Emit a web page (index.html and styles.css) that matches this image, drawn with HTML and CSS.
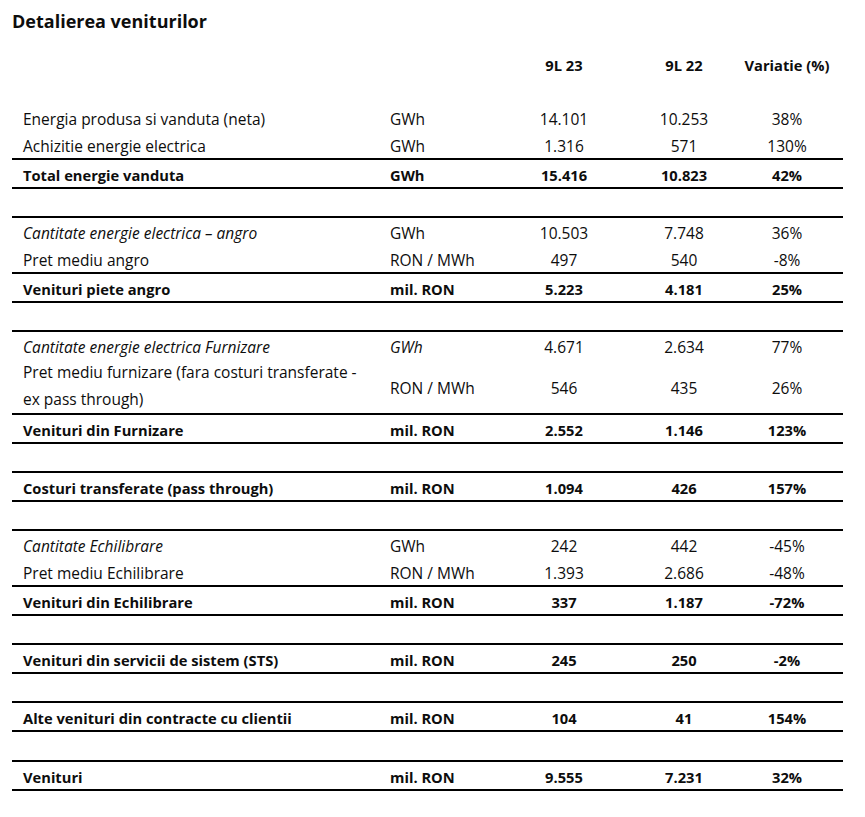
FILE: index.html
```html
<!DOCTYPE html>
<html lang="ro">
<head>
<meta charset="utf-8">
<title>Detalierea veniturilor</title>
<link rel="stylesheet" href="styles.css">
</head>
<body>
<h1 class="title">Detalierea veniturilor</h1>
<table class="rev">
  <colgroup>
    <col class="c-label"><col class="c-unit"><col class="c-num"><col class="c-num"><col class="c-var">
  </colgroup>
  <thead>
    <tr class="head">
      <th></th><th></th><th>9L 23</th><th>9L 22</th><th class="var">Variatie (%)</th>
    </tr>
  </thead>
  <tbody>
    <tr class="blank"><td colspan="5"></td></tr>
    <tr><td class="lbl">Energia produsa si vanduta (neta)</td><td class="unit">GWh</td><td>14.101</td><td>10.253</td><td class="var">38%</td></tr>
    <tr><td class="lbl">Achizitie energie electrica</td><td class="unit">GWh</td><td>1.316</td><td>571</td><td class="var">130%</td></tr>
    <tr class="bt bb b"><td class="lbl">Total energie vanduta</td><td class="unit">GWh</td><td>15.416</td><td>10.823</td><td class="var">42%</td></tr>
    <tr class="blank"><td colspan="5"></td></tr>

    <tr class="bt"><td class="lbl i">Cantitate energie electrica – angro</td><td class="unit">GWh</td><td>10.503</td><td>7.748</td><td class="var">36%</td></tr>
    <tr><td class="lbl">Pret mediu angro</td><td class="unit">RON / MWh</td><td>497</td><td>540</td><td class="var">-8%</td></tr>
    <tr class="bt bb b"><td class="lbl">Venituri piete angro</td><td class="unit">mil. RON</td><td>5.223</td><td>4.181</td><td class="var">25%</td></tr>
    <tr class="blank"><td colspan="5"></td></tr>

    <tr class="bt"><td class="lbl i">Cantitate energie electrica Furnizare</td><td class="unit i">GWh</td><td>4.671</td><td>2.634</td><td class="var">77%</td></tr>
    <tr class="two"><td class="lbl">Pret mediu furnizare (fara costuri transferate -<br>ex pass through)</td><td class="unit">RON / MWh</td><td>546</td><td>435</td><td class="var">26%</td></tr>
    <tr class="bt bb b"><td class="lbl">Venituri din Furnizare</td><td class="unit">mil. RON</td><td>2.552</td><td>1.146</td><td class="var">123%</td></tr>
    <tr class="blank"><td colspan="5"></td></tr>

    <tr class="bt bb b"><td class="lbl">Costuri transferate (pass through)</td><td class="unit">mil. RON</td><td>1.094</td><td>426</td><td class="var">157%</td></tr>
    <tr class="blank"><td colspan="5"></td></tr>

    <tr class="bt"><td class="lbl i">Cantitate Echilibrare</td><td class="unit">GWh</td><td>242</td><td>442</td><td class="var">-45%</td></tr>
    <tr><td class="lbl">Pret mediu Echilibrare</td><td class="unit">RON / MWh</td><td>1.393</td><td>2.686</td><td class="var">-48%</td></tr>
    <tr class="bt bb b"><td class="lbl">Venituri din Echilibrare</td><td class="unit">mil. RON</td><td>337</td><td>1.187</td><td class="var">-72%</td></tr>
    <tr class="blank"><td colspan="5"></td></tr>

    <tr class="bt bb b"><td class="lbl">Venituri din servicii de sistem (STS)</td><td class="unit">mil. RON</td><td>245</td><td>250</td><td class="var">-2%</td></tr>
    <tr class="blank"><td colspan="5"></td></tr>

    <tr class="bt bb b"><td class="lbl">Alte venituri din contracte cu clientii</td><td class="unit">mil. RON</td><td>104</td><td>41</td><td class="var">154%</td></tr>
    <tr class="blank tall"><td colspan="5"></td></tr>

    <tr class="bt bb b"><td class="lbl">Venituri</td><td class="unit">mil. RON</td><td>9.555</td><td>7.231</td><td class="var">32%</td></tr>
  </tbody>
</table>
</body>
</html>
```

FILE: styles.css
```css
html, body {
  margin: 0;
  padding: 0;
  background: #ffffff;
}

body {
  font-family: "Open Sans", "Liberation Sans", sans-serif;
  color: #0d0d0d;
  width: 865px;
}

.title {
  margin: 9px 0 0 12px;
  font-size: 18px;
  line-height: 24px;
  font-weight: 700;
  height: 41px;
}

.rev {
  margin-left: 12px;
  width: 831px;
  table-layout: fixed;
  border-collapse: separate;
  border-spacing: 0;
  font-size: 15.5px;
}

.c-label { width: 368px; }
.c-unit { width: 124px; }
.c-num { width: 120px; }
.c-var { width: 99px; }

.rev th,
.rev td {
  padding: 3px 0 0 0;
  line-height: 24px;
  height: 24px;
  text-align: center;
  vertical-align: middle;
  white-space: nowrap;
  font-weight: 400;
}

.rev th {
  font-weight: 700;
  font-size: 14.7px;
}

.rev .var {
  padding-right: 13px;
}

.rev .lbl {
  text-align: left;
  padding-left: 11px;
}

.rev .unit {
  text-align: left;
  padding-left: 10px;
}

.rev .i {
  font-style: italic;
}

.rev .b td {
  font-weight: 700;
  font-size: 14.7px;
}

.rev .bt td {
  border-top: 2px solid #000000;
}

.rev .bb td {
  border-bottom: 2px solid #000000;
}

.rev .blank td {
  padding: 0;
  height: 27px;
  line-height: 27px;
}

.rev .blank.tall td {
  height: 28px;
}

.rev .two .lbl {
  padding-top: 0;
  line-height: 27px;
  height: 54px;
}
```
